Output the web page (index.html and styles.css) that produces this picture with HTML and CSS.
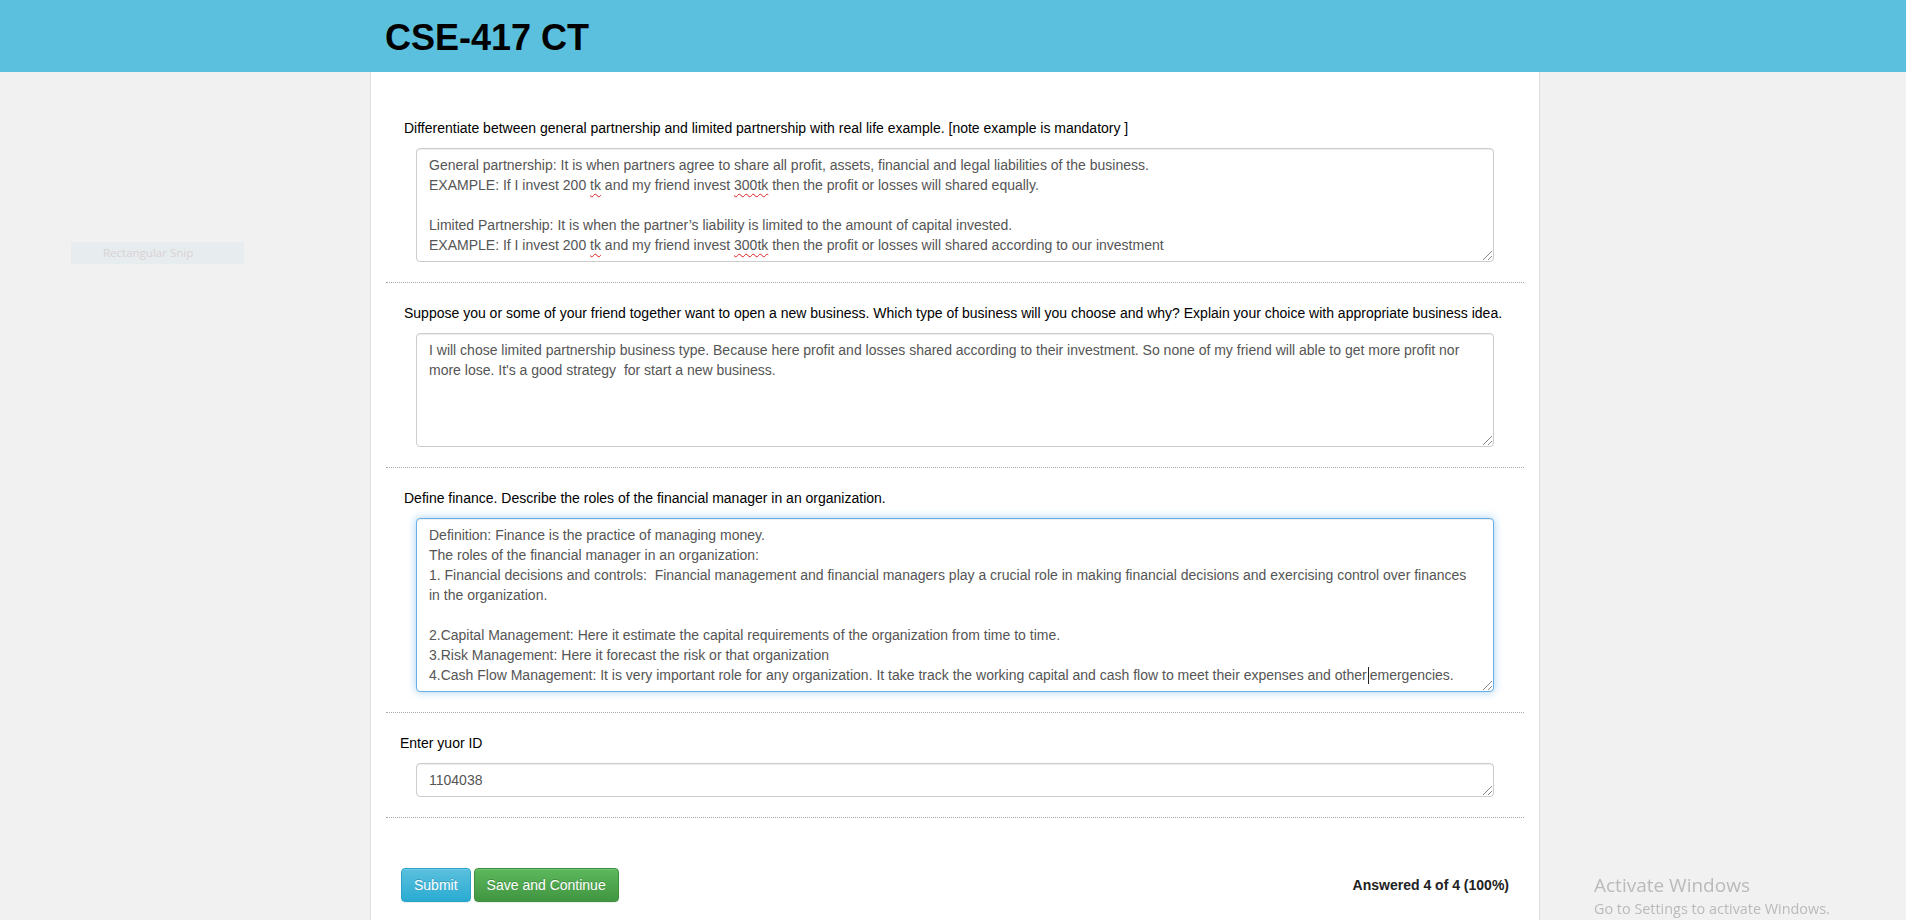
FILE: index.html
```html
<!DOCTYPE html>
<html lang="en">
<head>
<meta charset="utf-8">
<title>CSE-417 CT</title>
<link rel="stylesheet" href="styles.css">
</head>
<body>
<header class="topbar">
  <div class="topbar-inner">
    <h1 class="title">CSE-417 CT</h1>
  </div>
</header>

<main class="sheet">
  <section class="question">
    <p class="q-label">Differentiate between general partnership and limited partnership with real life example. [note example is mandatory ]</p>
    <div class="answer rows-5">General partnership: It is when partners agree to share all profit, assets, financial and legal liabilities of the business.
EXAMPLE: If I invest 200 <span class="misspelt">tk</span> and my friend invest <span class="misspelt">300tk</span> then the profit or losses will shared equally.

Limited Partnership: It is when the partner’s liability is limited to the amount of capital invested.
EXAMPLE: If I invest 200 <span class="misspelt">tk</span> and my friend invest <span class="misspelt">300tk</span> then the profit or losses will shared according to our investment<span class="grip"></span></div>
  </section>

  <section class="question">
    <p class="q-label">Suppose you or some of your friend together want to open a new business. Which type of business will you choose and why? Explain your choice with appropriate business idea.</p>
    <div class="answer rows-5">I will chose limited partnership business type. Because here profit and losses shared according to their investment. So none of my friend will able to get more profit nor
more lose. It's a good strategy  for start a new business.<span class="grip"></span></div>
  </section>

  <section class="question">
    <p class="q-label">Define finance. Describe the roles of the financial manager in an organization.</p>
    <div class="answer rows-8 is-focused">Definition: Finance is the practice of managing money.
The roles of the financial manager in an organization:
1. Financial decisions and controls:  Financial management and financial managers play a crucial role in making financial decisions and exercising control over finances
in the organization.

2.Capital Management: Here it estimate the capital requirements of the organization from time to time.
3.Risk Management: Here it forecast the risk or that organization
4.Cash Flow Management: It is very important role for any organization. It take track the working capital and cash flow to meet their expenses and other<span class="caret"></span>emergencies.<span class="grip"></span></div>
  </section>

  <section class="question">
    <p class="q-label q-label-tight">Enter yuor ID</p>
    <div class="answer rows-1">1104038<span class="grip"></span></div>
  </section>

  <div class="actions">
    <div class="btn-row">
      <button class="btn btn-info" type="button">Submit</button>
      <button class="btn btn-success" type="button">Save and Continue</button>
    </div>
    <div class="progress-text">Answered 4 of 4 (100%)</div>
  </div>
</main>

<div class="snip-ghost">Rectangular Snip</div>

<div class="activate">
  <div class="activate-title">Activate Windows</div>
  <div class="activate-sub">Go to Settings to activate Windows.</div>
</div>
</body>
</html>
```

FILE: styles.css
```css
* {
  box-sizing: border-box;
}

html, body {
  margin: 0;
  padding: 0;
}

body {
  background: #f1f1f1;
  font-family: "Liberation Sans", Arial, sans-serif;
  font-size: 14px;
  line-height: 20px;
  color: #333;
  min-height: 100vh;
  overflow: hidden;
}

.topbar {
  background: #5bc0de;
  height: 72px;
}

.topbar-inner {
  width: 1170px;
  margin-left: calc(50% - 583px);
  padding: 18px 15px 0;
}

.title {
  margin: 0;
  font-size: 36px;
  line-height: 40px;
  font-weight: 700;
  color: #000;
}

.sheet {
  width: 1170px;
  margin-left: calc(50% - 583px);
  background: #fff;
  border-left: 1px solid #dedede;
  border-right: 1px solid #dedede;
  padding: 26px 15px 0;
  min-height: calc(100vh - 72px);
}

.question {
  padding: 20px 0 20px;
  border-bottom: 1px dotted #a8a8a8;
}

.q-label {
  margin: 0 0 10px;
  padding-left: 18px;
  color: #000;
  font-size: 14px;
  line-height: 20px;
}

.q-label-tight {
  padding-left: 14px;
}

.answer {
  position: relative;
  margin: 0 30px;
  padding: 6px 12px;
  border: 1px solid #ccc;
  border-radius: 4px;
  background: #fff;
  color: #555;
  font-size: 14px;
  line-height: 20px;
  white-space: pre;
  overflow: hidden;
  box-shadow: inset 0 1px 1px rgba(0, 0, 0, 0.075);
}

.rows-1 { height: 34px; }
.rows-5 { height: 114px; }
.rows-8 { height: 174px; }

.is-focused {
  border-color: #66afe9;
  box-shadow: inset 0 1px 1px rgba(0, 0, 0, 0.075), 0 0 8px rgba(102, 175, 233, 0.6);
  overflow: visible;
}

.misspelt {
  text-decoration: underline wavy #e02020;
  text-decoration-thickness: 1px;
  text-underline-offset: 3px;
}

.caret {
  display: inline-block;
  width: 1px;
  height: 17px;
  margin: 0 1px 0 1px;
  vertical-align: -4px;
  background: #222;
}

.grip {
  position: absolute;
  right: 1px;
  bottom: 1px;
  width: 9px;
  height: 9px;
  background:
    linear-gradient(135deg, transparent 0 46%, #8a8a8a 46% 54%, transparent 54% 100%) 0 0 / 9px 9px no-repeat,
    linear-gradient(135deg, transparent 0 74%, #8a8a8a 74% 82%, transparent 82% 100%) 0 0 / 9px 9px no-repeat;
}

.actions {
  display: flex;
  justify-content: space-between;
  align-items: center;
  padding: 50px 15px 0;
}

.btn-row {
  display: flex;
  gap: 3px;
}

.btn {
  font-family: "Liberation Sans", Arial, sans-serif;
  font-size: 14px;
  line-height: 20px;
  padding: 6px 12px;
  border: 1px solid transparent;
  border-radius: 4px;
  color: #fff;
  cursor: pointer;
  text-shadow: 0 -1px 0 rgba(0, 0, 0, 0.2);
  box-shadow: inset 0 1px 0 rgba(255, 255, 255, 0.15), 0 1px 1px rgba(0, 0, 0, 0.075);
}

.btn-info {
  background: linear-gradient(to bottom, #5bc0de 0%, #2aabd2 100%);
  border-color: #28a4c9;
}

.btn-success {
  background: linear-gradient(to bottom, #5cb85c 0%, #419641 100%);
  border-color: #3e8f3e;
}

.progress-text {
  font-weight: 700;
  color: #222;
}

.snip-ghost {
  position: absolute;
  left: 71px;
  top: 242px;
  width: 173px;
  height: 22px;
  padding-left: 32px;
  background: #e7ecef;
  color: #d9d2d2;
  font-family: "Open Sans", "Noto Sans", sans-serif;
  font-size: 11.5px;
  line-height: 22px;
}

.activate {
  position: fixed;
  left: 1594px;
  top: 872px;
  font-family: "Open Sans", "Noto Sans", sans-serif;
  color: #bababa;
}

.activate-title {
  font-size: 19px;
  line-height: 27px;
}

.activate-sub {
  font-size: 14.4px;
  line-height: 20px;
}
```
